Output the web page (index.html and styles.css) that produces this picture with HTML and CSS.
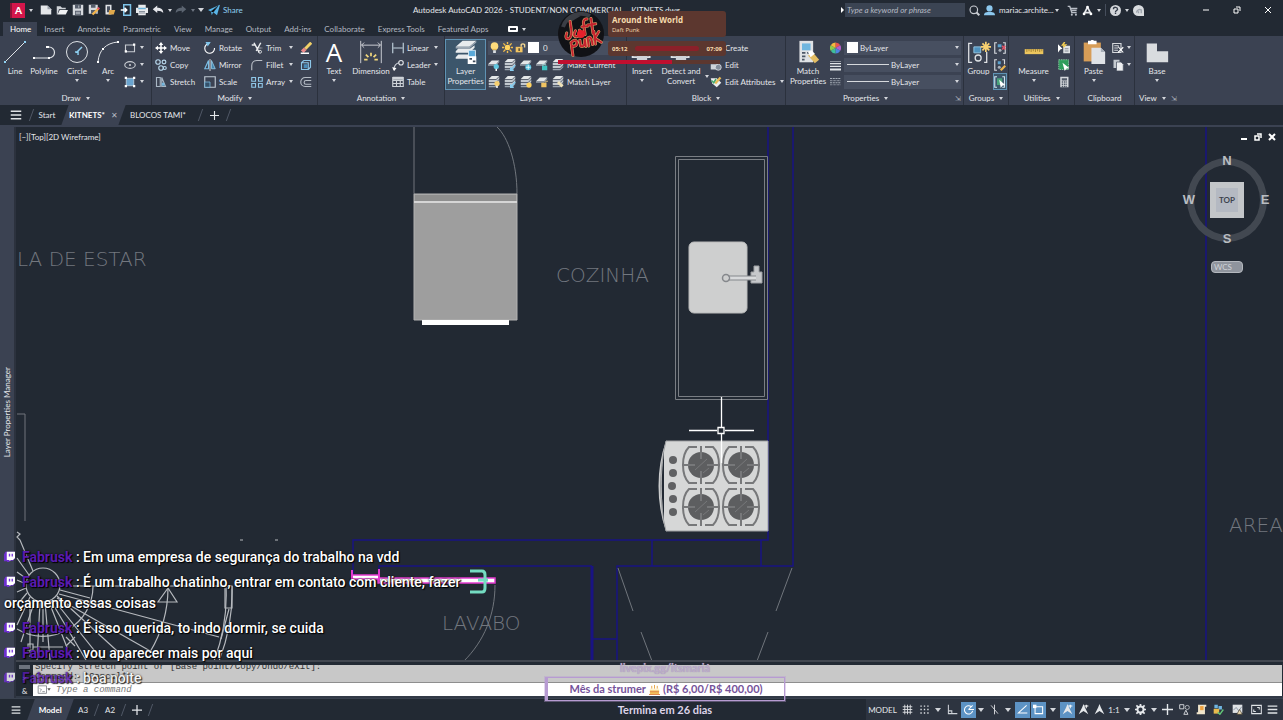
FILE: index.html
```html
<!DOCTYPE html>
<html lang="en">
<head>
<meta charset="utf-8">
<title>Autodesk AutoCAD 2026 - KITNETS.dwg</title>
<link rel="stylesheet" href="styles.css">
</head>
<body>
<svg class="defs" aria-hidden="true">
  <defs>
    <symbol id="new" viewBox="0 0 16 16"><path fill="#e4e6e9" d="M1 2h9l5 5v7H1z"/><path fill="#9aa1ab" d="M10 2v5h5z"/></symbol>
    <symbol id="open" viewBox="0 0 16 16"><path fill="#cfd3d8" d="M1 3h5l2 2h5v2H4l-2 7H1z"/><path fill="#f0f1f3" d="M5 8h11l-3 6H2z"/></symbol>
    <symbol id="save" viewBox="0 0 16 16"><path fill="#d6d9dd" d="M1 1h14v14H1z"/><path fill="#555d6b" d="M4 1h8v5H4zM4 9h8v6H4z"/><path stroke="#d6d9dd" d="M5 11h6M5 13h6M9 2v3"/></symbol>
    <symbol id="saveas" viewBox="0 0 16 16"><path fill="#d6d9dd" d="M1 1h12v12H1z"/><path fill="#555d6b" d="M4 1h6v4H4zM4 8h7v5H4z"/><path stroke="#f5b54a" stroke-width="3" d="M6 14l8-8"/><path stroke="#e2556b" stroke-width="3" d="M13 7l2-2"/></symbol>
    <symbol id="tablet" viewBox="0 0 16 16"><path fill="#e0e3e6" d="M2 1h8v13H2z"/><path fill="#4a5261" d="M4 3h4v8H4z"/><path fill="#e0a94c" d="M7 8h8l-2 6H6z"/></symbol>
    <symbol id="phone" viewBox="0 0 16 16"><path fill="none" stroke="#7ec3e8" stroke-width="2" d="M5 1h9v14H5z"/><path stroke="#fff" stroke-width="2" d="M1 8h8M6 5l3 3-3 3" fill="none"/></symbol>
    <symbol id="print" viewBox="0 0 16 16"><path fill="#e8eaec" d="M3 1h10v4h3v7h-3v3H3v-3H0V5h3z"/><path fill="#6cb4dc" d="M3 5h10v2H3z"/><path stroke="#6b7483" d="M4 10h8M4 12h8"/></symbol>
    <symbol id="undo" viewBox="0 0 16 16"><path fill="currentColor" d="M1 7l6-5v3c5 0 8 2 8 7-2-2-4-3-8-3v3z"/></symbol>
    <symbol id="redo" viewBox="0 0 16 16"><path fill="currentColor" d="M15 7L9 2v3C4 5 1 7 1 12c2-2 4-3 8-3v3z"/></symbol>
    <symbol id="plane" viewBox="0 0 16 16"><path fill="#59b4e6" d="M0 8l16-7-4 14-5-4-2 4-1-5z"/><path stroke="#233140" d="M4 10l9-7-6 8"/></symbol>
    <symbol id="search" viewBox="0 0 16 16"><circle cx="7" cy="7" r="5.500" fill="none" stroke="#c9cdd3" stroke-width="1.700"/><path stroke="#c9cdd3" stroke-width="3" d="M11 11l4 4"/></symbol>
    <symbol id="user" viewBox="0 0 16 16"><circle cx="8" cy="5" r="4.500" fill="#8cc8ee"/><path fill="#8cc8ee" d="M0 15c0-5 4-5 8-5s8 0 8 5z"/></symbol>
    <symbol id="cart" viewBox="0 0 16 16"><path fill="none" stroke="#b9bec6" stroke-width="2" d="M1 2h3l3 9h7M5 5h10M6 8h8"/><circle cx="7" cy="14" r="1.500" fill="#b9bec6"/><circle cx="13" cy="14" r="1.500" fill="#b9bec6"/></symbol>
    <symbol id="nodes" viewBox="0 0 16 16"><path fill="none" stroke="#e5e7ea" stroke-width="2.500" d="M8 3L3 13M8 3l5 10M4 11h8"/><circle cx="8" cy="3" r="2" fill="#fff"/><circle cx="3" cy="13" r="2" fill="#fff"/><circle cx="13" cy="13" r="2" fill="#fff"/></symbol>
    <symbol id="help" viewBox="0 0 16 16"><circle cx="8" cy="8" r="8" fill="#d3d6da"/><path fill="none" stroke="#333b48" stroke-width="2" d="M5 6c0-4 6-3 6 0 0 2-3 2-3 4M8 11v2"/></symbol>
    <symbol id="chatbot" viewBox="0 0 16 16"><path fill="#d9dcdf" d="M8 0a8 8 0 0 1 8 8v8H8A8 8 0 0 1 8 0z"/><path fill="none" stroke="#9da3ac" stroke-width="2" d="M5 11c1-4 4-5 7-4v5M8 12V9"/></symbol>
    <symbol id="line" viewBox="0 0 24 24"><path stroke="#dfe2e6" d="M2 22L22 2"/><path stroke="#8fd0f2" stroke-width="2" d="M1 22h2M21 2h2"/></symbol>
    <symbol id="pline" viewBox="0 0 24 24"><path fill="none" stroke="#dfe2e6" stroke-width="1.200" d="M2 18h15a5 5 0 0 0 0-11"/><path stroke="#fff" stroke-width="2" d="M1 18h2M16 18h2M14 7h3"/></symbol>
    <symbol id="circle" viewBox="0 0 24 24"><circle cx="12" cy="12" r="10.500" fill="none" stroke="#dfe2e6"/><path stroke="#8fd0f2" stroke-width="1.500" d="M11 13l6-6M10 12h3v3"/></symbol>
    <symbol id="arc" viewBox="0 0 24 24"><path fill="none" stroke="#dfe2e6" d="M2 22C3 10 10 3 22 2"/><path stroke="#fff" stroke-width="2" d="M1 22h2M6 9h2M21 2h2"/></symbol>
    <symbol id="rect" viewBox="0 0 16 16"><path fill="none" stroke="#c8ccd2" stroke-width="1.500" d="M2 4h12v9H2z"/><path fill="#fff" d="M1 11h3v3H1zM12 2h3v3h-3z"/></symbol>
    <symbol id="ellipse" viewBox="0 0 16 16"><ellipse cx="8" cy="8" rx="7" ry="4.500" fill="none" stroke="#c8ccd2" stroke-width="1.500"/><path stroke="#fff" stroke-width="2" d="M7 8h2"/></symbol>
    <symbol id="hatch" viewBox="0 0 16 16"><path fill="#6ba5d0" stroke="#c8d8e6" d="M3 3h10v10H3z"/><path fill="#fff" d="M1 1h3v3H1zM12 1h3v3h-3zM1 12h3v3H1zM12 12h3v3h-3z"/></symbol>
    <symbol id="move" viewBox="0 0 16 16"><path fill="#fff" d="M8 0l3 4H9v3h3V5l4 3-4 3V9H9v3h2l-3 4-3-4h2V9H4v2L0 8l4-3v2h3V4H5z"/></symbol>
    <symbol id="rotate" viewBox="0 0 16 16"><path fill="none" stroke="#fff" stroke-width="1.500" d="M7 2a6.500 6.500 0 1 0 7 6"/><path fill="#7fc4ea" d="M2 0h7L5 6z"/></symbol>
    <symbol id="trim" viewBox="0 0 16 16"><path fill="none" stroke="#e8eaed" stroke-width="2" d="M4 1l7 13M13 1L7 12M1 4h5"/><circle cx="12" cy="13" r="2" fill="none" stroke="#fff"/><path stroke="#fff" stroke-dasharray="2 1" d="M8 8h7"/></symbol>
    <symbol id="erase" viewBox="0 0 16 16"><path stroke="#f0d068" stroke-width="4" d="M15 1L7 9"/><path stroke="#ec8b8b" stroke-width="5" d="M7 9l-4 4"/><path stroke="#fff" stroke-width="2" d="M1 15h11"/></symbol>
    <symbol id="copy" viewBox="0 0 16 16"><g fill="none" stroke="#b8d8ec" stroke-width="1.500"><circle cx="4" cy="4" r="3"/><circle cx="12" cy="4" r="2.500"/><circle cx="8" cy="12" r="3"/><circle cx="13" cy="12" r="2"/></g></symbol>
    <symbol id="mirror" viewBox="0 0 16 16"><path fill="none" stroke="#7cbfe6" stroke-width="1.500" d="M6 2v11H1z"/><path fill="#4387b0" stroke="#9ed3ef" d="M10 2v11h5z"/><path stroke="#fff" d="M8 0v16"/></symbol>
    <symbol id="fillet" viewBox="0 0 16 16"><path fill="none" stroke="#b9bec6" stroke-width="1.500" d="M1 15V9c0-4 3-7 7-7h7"/></symbol>
    <symbol id="explode" viewBox="0 0 16 16"><path fill="none" stroke="#8cc6e8" stroke-width="1.500" d="M2 5h9v9H2zM2 5l3-3h9v9l-3 3"/><path fill="#4a8cb8" d="M5 7h5v5H5z"/></symbol>
    <symbol id="stretch" viewBox="0 0 16 16"><path fill="none" stroke="#a9b7c4" stroke-width="1.500" d="M2 2h5v12H2zM9 2l5 12H9z"/><path fill="#73b6de" d="M9 9h3l1 4H9z"/></symbol>
    <symbol id="scale" viewBox="0 0 16 16"><path fill="none" stroke="#c0cad3" stroke-width="1.500" d="M1 1h14v14H1z"/><path fill="#34516a" stroke="#7fc0e6" d="M1 8h7v7H1z"/></symbol>
    <symbol id="array" viewBox="0 0 16 16"><path fill="none" stroke="#8fc7e8" stroke-width="1.500" d="M1 2h5v5H1zM10 2h5v5h-5zM1 10h5v5H1zM10 10h5v5h-5z"/></symbol>
    <symbol id="offset" viewBox="0 0 16 16"><path fill="none" stroke="#b5bcc5" stroke-width="1.500" d="M15 2H7a6 6 0 0 0 0 12h8M15 6H8a2.500 2.500 0 0 0 0 5h7"/></symbol>
    <symbol id="dim" viewBox="0 0 28 28"><path stroke="#dfe2e6" fill="none" d="M2 1v26M26 1v26M3 6h22M6 3L3 6l3 3M22 3l3 3-3 3"/><path stroke="#f2d77c" stroke-width="2" d="M14 15v4M8 17l3 3M20 17l-3 3M6 23h4M18 23h4"/></symbol>
    <symbol id="linear" viewBox="0 0 16 16"><path fill="none" stroke="#c3d4e0" stroke-width="1.500" d="M1 1v14M15 1v14M2 8h12"/></symbol>
    <symbol id="leader" viewBox="0 0 16 16"><path fill="none" stroke="#c9ced5" stroke-width="1.500" d="M2 15C3 8 5 6 9 5"/><circle cx="12" cy="5" r="3" fill="none" stroke="#e2e5e9" stroke-width="1.500"/><path fill="#fff" d="M0 11l3 5 3-4z"/></symbol>
    <symbol id="table" viewBox="0 0 16 16"><path fill="none" stroke="#cdd2d8" stroke-width="1.500" d="M1 2h14v12H1zM1 6h14M1 10h14M6 6v8M11 6v8"/><path fill="#cdd2d8" d="M1 1h14v4H1z"/></symbol>
    <symbol id="layers" viewBox="0 0 28 28"><path fill="#e8ebed" d="M10 1h16l-8 7H2zM2 13l3-3h14l5-4v3l-6 6H2zM2 20l3-3h12v5H2z"/><path fill="#9da8b3" d="M2 8v2h16l8-7V1l-8 7z"/><path fill="#59a9d8" stroke="#e7f3fa" d="M17 12h8v8h-8z"/><path fill="#fff" d="M16 19h10v9H16z"/><path stroke="#3c4a59" stroke-width="2" d="M18 22h3M22 25h3"/></symbol>
    <symbol id="bulb" viewBox="0 0 16 16"><circle cx="8" cy="6" r="5.500" fill="#ffdc7c"/><path fill="#e7b950" d="M5 10h6v2H5z"/><path fill="#dce0e4" d="M6 12h4v4H6z"/></symbol>
    <symbol id="sun" viewBox="0 0 16 16"><circle cx="8" cy="8" r="4" fill="#ffd360"/><path stroke="#f2bd4a" stroke-width="2" d="M8 0v3M8 13v3M0 8h3M13 8h3M2 2l3 3M11 11l3 3M14 2l-3 3M5 11l-3 3"/></symbol>
    <symbol id="lock" viewBox="0 0 16 16"><path fill="#f1c462" d="M1 7h10v8H1z"/><path fill="none" stroke="#f1d591" stroke-width="2" d="M9 7V4a3 3 0 0 1 5 0v4"/><path fill="#4a4331" d="M5 9h2v4H5z"/></symbol>
    <symbol id="sheet" viewBox="0 0 16 16"><path fill="#e3e6e8" d="M5 2h10l-4 5H0z"/><path fill="#96a0ab" d="M0 7v2h11l4-5V2l-4 5z"/></symbol>
    <symbol id="stack" viewBox="0 0 16 16"><path fill="#e3e6e8" d="M5 0h10l-4 4H1z"/><path fill="#c3c9cf" d="M1 5h10l4-4v3l-4 4H1zM1 9h10l4-4v3l-4 4H1z"/><path fill="#98a2ad" d="M1 13h10l4-4v2l-4 4H1z"/></symbol>
    <symbol id="lyfrz" viewBox="0 0 16 16"><use href="#sheet"/><circle cx="11" cy="11" r="4" fill="#55bfdc"/><path stroke="#fff" d="M11 8v6M8 11h6"/></symbol>
    <symbol id="lyoff" viewBox="0 0 16 16"><use href="#sheet"/><circle cx="11" cy="10" r="3.500" fill="#62c8e0"/><path fill="#fff" d="M10 13h2v3h-2z"/></symbol>
    <symbol id="lylock" viewBox="0 0 16 16"><use href="#sheet"/><path fill="#3fc2c0" d="M8 9h7v6H8z"/><path fill="none" stroke="#a2e0df" d="M9 9V7h4v2"/></symbol>
    <symbol id="lybulb" viewBox="0 0 16 16"><use href="#stack"/><circle cx="12" cy="10" r="3.500" fill="#f5cf70"/><path fill="#fff" d="M11 13h2v3h-2z"/></symbol>
    <symbol id="lyarrow" viewBox="0 0 16 16"><use href="#stack"/><path stroke="#87ccef" stroke-width="2" d="M15 8l-6 7M9 11v4h4" fill="none"/></symbol>
    <symbol id="lysun" viewBox="0 0 16 16"><use href="#stack"/><circle cx="12" cy="12" r="3.500" fill="#ffd360"/></symbol>
    <symbol id="lymatch" viewBox="0 0 16 16"><use href="#stack"/><path stroke="#efe2b8" stroke-width="4" d="M8 8l6 6"/></symbol>
    <symbol id="lyopen" viewBox="0 0 16 16"><use href="#sheet"/><path fill="#f1c462" d="M7 9h7v6H7z"/><path fill="none" stroke="#f1d591" d="M13 9V7h3"/></symbol>
    <symbol id="tag" viewBox="0 0 16 16"><path fill="#eceef0" d="M1 3h8l6 6-6 6-6-5z"/><path stroke="#e9bb55" stroke-width="3" d="M7 10l7-8"/><path stroke="#47a96b" stroke-width="2" d="M2 6l3 3 3-5" fill="none"/></symbol>
    <symbol id="blk" viewBox="0 0 16 16"><path fill="#d0d4d9" d="M1 7h9v7H1z"/><circle cx="11" cy="11" r="4" fill="#848e9b" stroke="#e3e6e9"/></symbol>
    <symbol id="bigblk" viewBox="0 0 28 28"><path fill="none" stroke="#dfe2e5" stroke-width="2" d="M3 4h20v16H3z"/><path fill="#cfd3d8" d="M8 16h12v9H8z"/></symbol>
    <symbol id="match" viewBox="0 0 28 28"><path fill="#dfe2e5" d="M4 1h16v25H4z"/><path fill="#6fb6df" d="M7 4h10v8H7z"/><path stroke="#4d5867" stroke-width="2" d="M7 15h4M7 19h4M7 23h3M13 15h4"/><path fill="#e3bd63" d="M14 18l8 9 5-4-7-8z"/><path fill="#fff" d="M14 14l4-2 4 4-5 4z"/></symbol>
    <symbol id="wheel" viewBox="0 0 16 16"><path fill="#e8534f" d="M8 8V0a8 8 0 0 1 7 4z"/><path fill="#b45ec9" d="M8 8l7-4a8 8 0 0 1 0 8z"/><path fill="#4f86e0" d="M8 8l7 4a8 8 0 0 1-7 4z"/><path fill="#3fbf9b" d="M8 8v8a8 8 0 0 1-7-4z"/><path fill="#8ccc4b" d="M8 8l-7 4a8 8 0 0 1 0-8z"/><path fill="#f5b83d" d="M8 8L1 4a8 8 0 0 1 7-4z"/></symbol>
    <symbol id="weights" viewBox="0 0 16 16"><path fill="#e2e5e8" d="M0 2h16v1H0zM0 5h16v2H0zM0 9h16v2H0zM0 13h16v3H0z"/></symbol>
    <symbol id="ltype" viewBox="0 0 16 16"><path stroke="#a7aeb8" stroke-width="1.500" stroke-dasharray="3 1" d="M0 3h16M0 9h16"/><path stroke="#a7aeb8" stroke-width="1.500" stroke-dasharray="1 1" d="M0 6h16M0 12h16"/></symbol>
    <symbol id="group" viewBox="0 0 28 28"><path fill="none" stroke="#dfe2e6" stroke-width="1.500" d="M6 4H2v22h4M20 26h3V14"/><path fill="#4f91bd" stroke="#9bcbe8" d="M8 8h8v7H8z"/><circle cx="13" cy="21" r="3.500" fill="none" stroke="#dfe2e6" stroke-width="1.500"/><path stroke="#f7d070" stroke-width="2" d="M22 2v12M16 8h12M18 4l8 8M26 4l-8 8"/></symbol>
    <symbol id="ungroup" viewBox="0 0 16 16"><path fill="none" stroke="#d6d9de" stroke-width="1.500" d="M4 1H1v14h3M12 1h3v14h-3"/><path fill="#5ba1cd" d="M5 3h5v4H5z"/><circle cx="8" cy="11" r="2" fill="#aab1bb"/><path stroke="#df5367" stroke-width="2" d="M11 5l4 5M15 5l-4 5"/></symbol>
    <symbol id="gedit" viewBox="0 0 16 16"><path fill="none" stroke="#d6d9de" stroke-width="1.500" d="M4 1H1v14h3M11 1h3v6"/><path fill="#5ba1cd" d="M5 3h4v4H5z"/><circle cx="7" cy="11" r="2" fill="#aab1bb"/><path stroke="#ebb54e" stroke-width="3" d="M9 15l6-6"/></symbol>
    <symbol id="gsel" viewBox="0 0 16 16"><path fill="none" stroke="#cfe3ef" stroke-width="1.500" d="M4 1H1v14h3M11 1h3v14h-3"/><path fill="#49a27b" d="M4 3h7v9H4z"/><path fill="#fff" d="M7 5l8 7-4 1-2 3z"/></symbol>
    <symbol id="ruler" viewBox="0 0 28 12"><path fill="#edc65e" d="M1 2h26v7H1z"/><path stroke="#8a6c25" d="M4 2v4M7 2v3M10 2v4M13 2v3M16 2v4M19 2v3M22 2v4M25 2v3"/></symbol>
    <symbol id="qsel" viewBox="0 0 16 16"><path fill="#dfe2e5" d="M7 5h9v10H7z"/><path fill="#fff" d="M0 3l6 6-3 1-3 4z"/><path stroke="#f2cd53" stroke-width="2" d="M9 0L6 4h4L7 7" fill="none"/><path stroke="#68717e" d="M9 9h5M9 12h5"/></symbol>
    <symbol id="selall" viewBox="0 0 16 16"><path fill="#2e9d5b" stroke="#9ddcb4" stroke-dasharray="2 1" d="M1 1h13v13H1z"/><path fill="#fff" d="M6 5l9 7-4 1-2 3z"/></symbol>
    <symbol id="calc" viewBox="0 0 16 16"><path fill="#d5d8dc" d="M3 1h11v14H3z"/><path fill="#525b69" d="M5 3h7v3H5z"/><path stroke="#525b69" stroke-width="2" stroke-dasharray="2 1" d="M5 8h7M5 11h7M5 14h7"/></symbol>
    <symbol id="paste" viewBox="0 0 28 28"><path fill="#d79d57" d="M2 3h20v22H2z"/><path fill="#fff" d="M7 1h3l2-2 2 2h3v4H7z"/><path fill="#dfe2e6" d="M11 9h11l5 5v14H11z"/><path fill="#a7aeb8" d="M22 9v5h5z"/></symbol>
    <symbol id="cut" viewBox="0 0 16 16"><path fill="none" stroke="#d5d8dc" stroke-width="1.500" d="M1 2h11v12H1zM3 5h6M3 8h5M3 11h5"/><path stroke="#fff" stroke-width="1.500" d="M8 6l7 8M15 7l-7 7"/></symbol>
    <symbol id="clip" viewBox="0 0 16 16"><path fill="#c5cad0" d="M2 1h8v11H2z"/><path fill="#eceef0" stroke="#495262" d="M6 4h6l3 3v9H6z"/></symbol>
    <symbol id="base" viewBox="0 0 28 24"><path fill="#d9dcdf" d="M2 2h12v9h13v13H2z"/></symbol>
    <symbol id="grid" viewBox="0 0 16 16"><path stroke="#dfe2e5" d="M4 1v14M8 1v14M12 1v14M1 4h14M1 8h14M1 12h14" stroke-width="1.300"/></symbol>
    <symbol id="snap" viewBox="0 0 16 16"><path stroke="#dfe2e5" stroke-width="2" stroke-dasharray="2 3" d="M2 3h13M2 8h13M2 13h13"/></symbol>
    <symbol id="ortho" viewBox="0 0 16 16"><path fill="none" stroke="#cfd3d8" stroke-width="1.500" d="M2 1v13h13M2 10h5v4"/></symbol>
    <symbol id="polar" viewBox="0 0 16 16"><path fill="none" stroke="#fff" stroke-width="1.500" d="M12 4a6 6 0 1 0 2 6M8 8h8M8 8l6-6"/></symbol>
    <symbol id="iso" viewBox="0 0 16 16"><path stroke="#dfe2e5" stroke-width="1.300" d="M3 2l10 12M8 1v14"/></symbol>
    <symbol id="track" viewBox="0 0 16 16"><path fill="none" stroke="#fff" stroke-width="1.500" d="M14 2L2 13h13"/></symbol>
    <symbol id="osnap" viewBox="0 0 16 16"><path fill="none" stroke="#fff" stroke-width="1.500" d="M3 4h11v10H3z"/><path fill="#fff" d="M0 1h5v5H0z"/></symbol>
    <symbol id="anno" viewBox="0 0 16 16"><path fill="#e5e8eb" d="M8 0l2 5 5 10-7-5-7 5L6 5z"/></symbol>
    <symbol id="anno2" viewBox="0 0 16 16"><use href="#anno"/><path stroke="#fff" stroke-width="1.500" d="M12 1v5M9 3h6"/></symbol>
    <symbol id="gear" viewBox="0 0 16 16"><circle cx="8" cy="8" r="4.500" fill="none" stroke="#e5e8eb" stroke-width="3"/><path stroke="#e5e8eb" stroke-width="2.500" d="M8 0v3M8 13v3M0 8h3M13 8h3M2 2l3 3M11 11l3 3M14 2l-3 3M5 11l-3 3"/></symbol>
    <symbol id="plus" viewBox="0 0 16 16"><path stroke="#e5e8eb" stroke-width="2" d="M8 0v16M0 8h16"/></symbol>
    <symbol id="iso2" viewBox="0 0 16 16"><path fill="none" stroke="#dfe2e5" stroke-width="1.300" d="M1 1h6v6H1zM7 15l3-6 3 6z"/><circle cx="12" cy="5" r="3" fill="none" stroke="#dfe2e5"/></symbol>
    <symbol id="scroll" viewBox="0 0 16 16"><path fill="#f0e5cb" d="M3 1h12v3h-2v11H1v-3h2z"/><path fill="#eea23f" d="M6 3h5v6H6z"/></symbol>
    <symbol id="puzzle" viewBox="0 0 16 16"><path fill="#6fb5e0" d="M2 1h5v5H2zM8 3h5v5H8z"/><path fill="#e7ba4d" d="M1 7h8v7H1z"/><path stroke="#64c878" stroke-width="2" fill="none" d="M7 12l3 3 5-7"/></symbol>
    <symbol id="photo" viewBox="0 0 16 16"><path fill="#dfe2e5" d="M1 1h14v12H1z"/><path fill="none" stroke="#69778a" d="M2 9l4-4 4 5 4-6"/><path fill="#e9d8b5" stroke="#4a4232" d="M7 15l4-7 4 7z"/></symbol>
    <symbol id="full" viewBox="0 0 16 16"><path fill="none" stroke="#e0e3e6" stroke-width="1.500" d="M1 2h14v12H1zM4 8v3h3M12 8V5H9"/></symbol>
    <symbol id="menu" viewBox="0 0 16 16"><path stroke="#e0e3e6" stroke-width="2" d="M1 3h14M1 8h14M1 13h14"/></symbol>
    <symbol id="twitch" viewBox="0 0 16 16"><path fill="#6d2fcf" d="M2 1L0 5v10h4l2 2 3-3h4l3-3V1z"/><path fill="#fff" d="M4 1h12v9l-3 3h-3l-2 2v-2H4z"/><path stroke="#7b3bdc" stroke-width="2" d="M8 4v4M12 4v4"/></symbol>
  </defs>
</svg>

<header class="titlebar">
  <div class="quick">
    <button class="logo" aria-label="Application menu">A</button><i class="dd"></i>
    <button aria-label="New"><svg><use href="#new"/></svg></button>
    <button aria-label="Open"><svg><use href="#open"/></svg></button>
    <button aria-label="Save"><svg><use href="#save"/></svg></button>
    <button aria-label="Save as"><svg><use href="#saveas"/></svg></button>
    <button aria-label="Open from web"><svg><use href="#tablet"/></svg></button>
    <button aria-label="Save to mobile"><svg><use href="#phone"/></svg></button>
    <button aria-label="Plot"><svg><use href="#print"/></svg></button>
    <button class="undo" aria-label="Undo"><svg><use href="#undo"/></svg></button><i class="dd"></i>
    <button class="redo" aria-label="Redo"><svg><use href="#redo"/></svg></button><i class="dd dim"></i>
    <i class="dd bar"></i>
    <button class="share"><svg><use href="#plane"/></svg>Share</button>
  </div>
  <div class="apptitle">Autodesk AutoCAD 2026 - STUDENT/NON COMMERCIAL &nbsp;&nbsp; KITNETS.dwg</div>
  <div class="account">
    <i class="dd side"></i>
    <input class="search" type="text" placeholder="Type a keyword or phrase" aria-label="Search help">
    <button aria-label="Search"><svg><use href="#search"/></svg></button>
    <button class="who"><svg><use href="#user"/></svg>mariac.archite...</button><i class="dd"></i>
    <button aria-label="Store"><svg><use href="#cart"/></svg></button>
    <button aria-label="Apps"><svg><use href="#nodes"/></svg></button><i class="dd"></i>
    <span class="rule"></span>
    <button aria-label="Help"><svg><use href="#help"/></svg></button><i class="dd"></i>
    <button aria-label="Assistant"><svg><use href="#chatbot"/></svg></button>
    <div class="winbtns">
      <button aria-label="Minimize"><svg viewBox="0 0 8 8"><path stroke="#fff" d="M1 4h6"/></svg></button>
      <button aria-label="Restore"><svg viewBox="0 0 8 8"><path fill="none" stroke="#fff" d="M1 3h4v4H1zM3 1h4v4"/></svg></button>
      <button aria-label="Close"><svg viewBox="0 0 8 8"><path stroke="#fff" d="M1 1l6 6M7 1L1 7"/></svg></button>
    </div>
  </div>
</header>

<nav class="menutabs">
  <button class="on">Home</button><button>Insert</button><button>Annotate</button><button>Parametric</button><button>View</button><button>Manage</button><button>Output</button><button>Add-ins</button><button>Collaborate</button><button>Express Tools</button><button>Featured Apps</button>
  <button class="ribtoggle" aria-label="Minimize ribbon"><span class="pill"></span><i class="dd"></i></button>
</nav>

<section class="ribbon">
  <div class="panel draw">
    <div class="body">
      <button class="big"><svg><use href="#line"/></svg>Line</button>
      <button class="big"><svg><use href="#pline"/></svg>Polyline</button>
      <button class="big"><svg><use href="#circle"/></svg>Circle<i class="dd"></i></button>
      <button class="big"><svg><use href="#arc"/></svg>Arc<i class="dd"></i></button>
      <div class="col">
        <button aria-label="Rectangle"><svg><use href="#rect"/></svg><i class="dd"></i></button>
        <button aria-label="Ellipse"><svg><use href="#ellipse"/></svg><i class="dd"></i></button>
        <button aria-label="Hatch"><svg><use href="#hatch"/></svg><i class="dd"></i></button>
      </div>
    </div>
    <div class="cap">Draw<i class="dd"></i></div>
  </div>
  <div class="panel modify">
    <div class="body">
      <div class="col"><button><svg><use href="#move"/></svg>Move</button><button><svg><use href="#copy"/></svg>Copy</button><button><svg><use href="#stretch"/></svg>Stretch</button></div>
      <div class="col"><button><svg><use href="#rotate"/></svg>Rotate</button><button><svg><use href="#mirror"/></svg>Mirror</button><button><svg><use href="#scale"/></svg>Scale</button></div>
      <div class="col"><button><svg><use href="#trim"/></svg>Trim<i class="dd end"></i></button><button><svg><use href="#fillet"/></svg>Fillet<i class="dd end"></i></button><button><svg><use href="#array"/></svg>Array<i class="dd end"></i></button></div>
      <div class="col"><button aria-label="Erase"><svg><use href="#erase"/></svg></button><button aria-label="Explode"><svg><use href="#explode"/></svg></button><button aria-label="Offset"><svg><use href="#offset"/></svg></button></div>
    </div>
    <div class="cap">Modify<i class="dd"></i></div>
  </div>
  <div class="panel annot">
    <div class="body">
      <button class="big"><span class="bigA">A</span>Text<i class="dd"></i></button>
      <button class="big"><svg><use href="#dim"/></svg>Dimension</button>
      <div class="col"><button><svg><use href="#linear"/></svg>Linear<i class="dd end"></i></button><button><svg><use href="#leader"/></svg>Leader<i class="dd end"></i></button><button><svg><use href="#table"/></svg>Table</button></div>
    </div>
    <div class="cap">Annotation<i class="dd"></i></div>
  </div>
  <div class="panel layer">
    <div class="body">
      <button class="big lit"><svg><use href="#layers"/></svg>Layer<br>Properties</button>
      <div class="col">
        <div class="combo"><svg><use href="#bulb"/></svg><svg><use href="#sun"/></svg><svg><use href="#lock"/></svg><b class="swatch"></b><select aria-label="Layer"><option>0</option></select></div>
        <div class="row"><button aria-label="Off"><svg><use href="#lyoff"/></svg></button><button aria-label="Isolate"><svg><use href="#lyarrow"/></svg></button><button aria-label="Freeze"><svg><use href="#lyfrz"/></svg></button><button aria-label="Lock"><svg><use href="#lylock"/></svg></button><button><svg><use href="#stack"/></svg>Make Current</button></div>
        <div class="row"><button aria-label="Turn on"><svg><use href="#lybulb"/></svg></button><button aria-label="Unisolate"><svg><use href="#lyarrow"/></svg></button><button aria-label="Thaw"><svg><use href="#lysun"/></svg></button><button aria-label="Unlock"><svg><use href="#lyopen"/></svg></button><button><svg><use href="#lymatch"/></svg>Match Layer</button></div>
      </div>
    </div>
    <div class="cap">Layers<i class="dd"></i></div>
  </div>
  <div class="panel block">
    <div class="body">
      <button class="big"><svg><use href="#bigblk"/></svg>Insert<i class="dd"></i></button>
      <button class="big"><svg><use href="#bigblk"/></svg>Detect and<br>Convert</button>
      <button class="more" aria-label="Detect options"><i class="dd"></i></button>
      <div class="col"><button><svg><use href="#blk"/></svg>Create</button><button><svg><use href="#blk"/></svg>Edit</button><button><svg><use href="#tag"/></svg>Edit Attributes<i class="dd end"></i></button></div>
    </div>
    <div class="cap">Block<i class="dd"></i></div>
  </div>
  <div class="panel props">
    <div class="body">
      <button class="big"><svg><use href="#match"/></svg>Match<br>Properties</button>
      <div class="col">
        <div class="prow"><svg><use href="#wheel"/></svg><span class="combo"><b class="swatch"></b><select aria-label="Object color"><option>ByLayer</option></select><i class="dd"></i></span></div>
        <div class="prow"><svg><use href="#weights"/></svg><span class="combo"><b class="stroke"></b><select aria-label="Lineweight"><option>ByLayer</option></select><i class="dd"></i></span></div>
        <div class="prow"><svg><use href="#ltype"/></svg><span class="combo"><b class="stroke"></b><select aria-label="Linetype"><option>ByLayer</option></select><i class="dd"></i></span></div>
      </div>
    </div>
    <div class="cap">Properties<i class="dd"></i><span class="launch">⇲</span></div>
  </div>
  <div class="panel groups">
    <div class="body">
      <button class="big"><svg><use href="#group"/></svg>Group</button>
      <div class="col"><button aria-label="Ungroup"><svg><use href="#ungroup"/></svg></button><button aria-label="Group edit"><svg><use href="#gedit"/></svg></button><button class="lit" aria-label="Group selection"><svg><use href="#gsel"/></svg></button></div>
    </div>
    <div class="cap">Groups<i class="dd"></i></div>
  </div>
  <div class="panel utils">
    <div class="body">
      <button class="big"><svg><use href="#ruler"/></svg>Measure<i class="dd"></i></button>
      <div class="col"><button aria-label="Quick select"><svg><use href="#qsel"/></svg></button><button aria-label="Select all"><svg><use href="#selall"/></svg></button><button aria-label="Calculator"><svg><use href="#calc"/></svg></button></div>
    </div>
    <div class="cap">Utilities<i class="dd"></i></div>
  </div>
  <div class="panel clipb">
    <div class="body">
      <button class="big"><svg><use href="#paste"/></svg>Paste<i class="dd"></i></button>
      <div class="col"><button aria-label="Cut"><svg><use href="#cut"/></svg><i class="dd"></i></button><button aria-label="Copy clip"><svg><use href="#clip"/></svg><i class="dd"></i></button></div>
    </div>
    <div class="cap">Clipboard</div>
  </div>
  <div class="panel view">
    <div class="body"><button class="big"><svg><use href="#base"/></svg>Base<i class="dd"></i></button></div>
    <div class="cap">View<i class="dd"></i><span class="launch">⇲</span></div>
  </div>
</section>

<nav class="filetabs">
  <button class="burger" aria-label="Files"><svg><use href="#menu"/></svg></button>
  <i class="slash"></i>
  <button class="start">Start</button>
  <button class="current"><span>KITNETS*</span><span class="x">✕</span></button>
  <button class="other">BLOCOS TAMI*</button>
  <i class="slash"></i>
  <button class="add" aria-label="New drawing"><svg><use href="#plus"/></svg></button>
  <i class="slash"></i>
</nav>

<main class="work">
  <aside class="palette"><span>Layer Properties Manager</span></aside>
  <div class="stage">
    <div class="canvas">
      <svg class="drawing" role="img" aria-label="Kitchen floor plan">
        <defs>
          <g id="burner">
            <circle r="13" fill="#5d5e60"/>
            <g fill="none" stroke="#77787a" stroke-width="2">
              <path d="M-4-18h-8c-8 8-8 28 0 36h8M4-18h8c8 8 8 28 0 36H4M0-19v13M0 19V6M-19 0h13M19 0H6"/>
            </g>
            <path d="M-6 5L6-6M2 8l6-5" stroke="#77787a"/>
          </g>
        </defs>
        <g transform="translate(-16 -127)" fill="none">
          <g stroke="#191383" stroke-width="1.500">
            <path d="M768 127v413H353v36M793 127v439H617v94M379 576v-10h213M652 540v26M761 540v26M592 639h25M1206 127v533"/>
            <path d="M592 566v94" stroke-width="3"/>
          </g>
          <g stroke="#70757c">
            <path d="M414 127v67M497 127c11 10 20 36 20 67M17 414h8v107"/>
            <path d="M618 568l15 43M641 632l11 29M792 568l-16 43M768 632l-11 29M495 585c0 30-11 56-31 76"/>
            <path d="M675.500 156.500h92v243h-92zM678.500 159.500h86v237h-86z" stroke="#7a7e84"/>
          </g>
          <path d="M414 194h103v126H414z" fill="#9e9e9e" stroke="#b2b2b2"/>
          <path d="M415 195h101v6H415z" fill="#8e8e8e"/>
          <path d="M414 202h103" stroke="#d5d5d5" stroke-width="2"/>
          <path d="M422 320h87v5h-87z" fill="#fff"/>
          <rect x="689" y="242" width="58" height="71" rx="5" fill="#cecfcf" stroke="#b9baba"/>
          <path d="M754 266h5v6h3v11h-11v-11h3z" fill="#c6c8cb" stroke="#9da0a4"/>
          <path d="M728 278h28" stroke="#85888c" stroke-width="5"/><path d="M728 278h28" stroke="#d8dadc" stroke-width="3"/>
          <circle cx="726" cy="278" r="3.500" stroke="#85888c" stroke-width="1.500"/>
          <path d="M667 441c-10 28-10 62 0 90" stroke="#cbcccd" stroke-width="2"/>
          <path d="M666 441h102v90H666c-7-27-7-63 0-90z" fill="#d6d7d7" stroke="#9fa1a3"/>
          <path d="M664 452c-3 22-3 46 0 68z" fill="#222933"/>
          <g fill="#606163"><circle cx="673" cy="460" r="4"/><circle cx="673" cy="473" r="4"/><circle cx="672" cy="486" r="4"/><circle cx="673" cy="499" r="4"/><circle cx="673" cy="512" r="4"/></g>
          <use href="#burner" x="701" y="465"/><use href="#burner" x="741" y="465"/><use href="#burner" x="701" y="507"/><use href="#burner" x="741" y="507"/>
          <path d="M689 430.500h28M725 430.500h29M721.500 397v30M721.500 434v29" stroke="#fff" stroke-width="1.300"/>
          <path d="M718 427.500h6v6h-6z" stroke="#fff" stroke-width="1.300"/>
          <path d="M352 575h27v3h116v5H378v-4h-26z" fill="#fff" stroke="#e33ad0" stroke-width="1.500"/>
          <path d="M352 570v12M379 569v13" stroke="#e33ad0" stroke-width="2"/>
          <path d="M470 571h12q3 0 3 4v13q0 4-3 4h-12M478 580h10" stroke="#74dcc2" stroke-width="3"/>
          <g stroke="#b6b9be" stroke-width="1.200">
            <circle cx="43" cy="585" r="17"/>
            <path d="M93 586a50 50 0 0 1-76 43M168 588a125 125 0 0 1-18 64M232 586a190 190 0 0 1-13 75M226 586a185 185 0 0 1-12 75"/>
            <path d="M73 586h155M60 590l30 8M59 594l160 43M57 598l95 54M54 600l48 60M49 602l23 58M45 602l5 58M40 602l-3 58M35 600l-14 42M30 597l-13 28M27 593l-10 12M26 588l-9 4M26 584l-9-4M27 579l-10-7M29 575l-12-17M33 571l-13-31-3-3 3-3-3-2M57 596l70 64M51 601l35 59M43 602v40"/>
            <path d="M168 588l-10 14h19zM28 644h5v6h-5zM33 647h30M66 637l9 9M75 637l-9 9M30 602v55M225 586h7v22h-7zM229 609l-8 30"/>
            <path d="M240 540h3M275 540h3"/>
          </g>
          <g class="cadtext">
            <text x="17" y="266">LA DE ESTAR</text><text x="556" y="282">COZINHA</text><text x="442" y="630">LAVABO</text><text x="1229" y="532">AREA</text>
          </g>
        </g>
      </svg>
      <span class="vplabel">[−][Top][2D Wireframe]</span>
      <div class="viewtools">
        <div class="vpbtns">
          <button aria-label="Minimize view"><svg viewBox="0 0 8 8"><path stroke="#fff" stroke-width="2" d="M1 6h6"/></svg></button>
          <button aria-label="Restore view"><svg viewBox="0 0 8 8"><path fill="none" stroke="#fff" stroke-width="1.500" d="M1 3h4v4H1zM3 1h4v4"/></svg></button>
          <button aria-label="Close view"><svg viewBox="0 0 8 8"><path stroke="#fff" stroke-width="2" d="M1 1l6 6M7 1L1 7"/></svg></button>
        </div>
        <div class="cube">
          <b>N</b>
          <b>W</b><button>TOP</button><b>E</b>
          <b>S</b>
        </div>
        <button class="wcs">WCS</button>
      </div>
    </div>
    <div class="command">
      <div class="grip"><i></i><span>×</span><span>&amp;</span></div>
      <div class="cmdbox">
        <div class="history"><div>Specify stretch point or [Base point/Copy/Undo/eXit]:</div><div>Command: *Cancel*</div></div>
        <label class="prompt"><svg viewBox="0 0 16 12"><path fill="none" stroke="#7c8086" d="M1 1h10v9H1zM3 4l2 2-2 2M6 8h3"/><path fill="#555" d="M12 4h4l-2 3z"/></svg><input type="text" placeholder="Type a command" aria-label="Command line"></label>
      </div>
    </div>
  </div>
</main>

<footer class="status">
  <div class="layouts">
    <button class="burger" aria-label="Layouts"><svg><use href="#menu"/></svg></button>
    <button class="model"><span>Model</span></button>
    <button>A3</button><i class="slash"></i><button>A2</button><i class="slash"></i>
    <button aria-label="New layout"><svg><use href="#plus"/></svg></button><i class="slash"></i>
  </div>
  <div class="toggles">
    <button class="txt">MODEL</button><button aria-label="Grid"><svg><use href="#grid"/></svg></button><button aria-label="Snap"><svg><use href="#snap"/></svg></button><i class="dd"></i>
    <button aria-label="Ortho"><svg><use href="#ortho"/></svg></button><button class="hot" aria-label="Polar"><svg><use href="#polar"/></svg></button><i class="dd"></i>
    <button aria-label="Isodraft"><svg><use href="#iso"/></svg></button><i class="dd"></i>
    <button class="hot" aria-label="Tracking"><svg><use href="#track"/></svg></button><button class="hot" aria-label="Object snap"><svg><use href="#osnap"/></svg></button><i class="dd"></i>
    <button class="hot" aria-label="Annotation visibility"><svg><use href="#anno2"/></svg></button><button aria-label="Auto scale"><svg><use href="#anno2"/></svg></button><button aria-label="Scale"><svg><use href="#anno"/></svg></button><button class="ratio">1:1</button><i class="dd"></i>
    <button aria-label="Workspace"><svg><use href="#gear"/></svg></button><i class="dd"></i><button aria-label="Monitor"><svg><use href="#plus"/></svg></button>
    <button aria-label="Isolate objects"><svg><use href="#iso2"/></svg></button><button aria-label="License"><svg><use href="#scroll"/></svg></button><button aria-label="Add-ins"><svg><use href="#puzzle"/></svg></button><button aria-label="Performance"><svg><use href="#photo"/></svg></button><button aria-label="Clean screen"><svg><use href="#full"/></svg></button><button aria-label="Customize"><svg><use href="#menu"/></svg></button>
  </div>
</footer>

<div class="player">
  <svg class="cover" viewBox="0 0 46 46">
    <circle cx="23" cy="23" r="23" fill="#111216"/>
    <path d="M5 16A19 19 0 0 1 32 5M12 9l10-6" stroke="#3b3e45" stroke-width="4" fill="none"/>
    <g transform="rotate(-8 23 23)">
      <g fill="none" stroke="#d9ad6e" stroke-width="3" stroke-linejoin="round" stroke-linecap="round"><path d="M9 20q-3 6 1 6 4-1 4-10V9M18 19q-4 5 0 6 4 0 4-6v6M27 24V12q1-4 4-3M25 16h6M35 24V9M31 15h8M12 43V30q5-4 6 1-1 4-5 3M21 29v6q4 2 5-6v7M29 36v-8q4-3 4 7M36 35V22M41 23l-5 6 6 5"/></g>
      <g fill="none" stroke="#c4222e" stroke-width="2" stroke-linejoin="round" stroke-linecap="round"><path d="M9 20q-3 6 1 6 4-1 4-10V9M18 19q-4 5 0 6 4 0 4-6v6M27 24V12q1-4 4-3M25 16h6M35 24V9M31 15h8M12 43V30q5-4 6 1-1 4-5 3M21 29v6q4 2 5-6v7M29 36v-8q4-3 4 7M36 35V22M41 23l-5 6 6 5"/></g>
    </g>
    <circle cx="23" cy="23" r="4" fill="#e5202b"/>
  </svg>
  <div class="trackinfo"><strong>Around the World</strong><span>Daft Punk</span></div>
  <div class="times"><span>05:12</span><i></i><span>07:09</span></div>
  <progress value="114" max="162" aria-label="Playback"></progress>
</div>

<div class="chat">
  <p><svg><use href="#twitch"/></svg><b>Fabrusk</b> : Em uma empresa de segurança do trabalho na vdd</p>
  <p><svg><use href="#twitch"/></svg><b>Fabrusk</b> : É um trabalho chatinho, entrar em contato com cliente, fazer orçamento essas coisas</p>
  <p><svg><use href="#twitch"/></svg><b>Fabrusk</b> : É isso querida, to indo dormir, se cuida</p>
  <p><svg><use href="#twitch"/></svg><b>Fabrusk</b> : vou aparecer mais por aqui</p>
  <p class="fading"><svg><use href="#twitch"/></svg><b>Fabrusk</b> : boa noite</p>
</div>

<div class="goal">
  <div class="link">livepix.gg/itsmariá</div>
  <div class="meter">Mês da strumer
    <svg viewBox="0 0 12 12"><path fill="#f3c05a" d="M1 6h10v5H1z"/><path fill="#e08a4b" d="M1 8h10v1H1zM0 11h12v1H0z"/><path fill="#fff2d0" d="M1 5h10v2H1z"/><path stroke="#e5a13b" d="M3 2v3M6 1v4M9 2v3"/></svg>
    (R$ 6,00/R$ 400,00)</div>
  <div class="ends">Termina em 26 dias</div>
</div>
</body>
</html>
```
FILE: styles.css
```css
* { box-sizing: border-box; }
body {
  margin: 0;
  min-height: 100vh;
  display: flex;
  flex-direction: column;
  position: relative;
  overflow: hidden;
  background: #222933;
  color: #e4e6ea;
  font: 8px/10px Lato, "Open Sans", sans-serif;
}
.defs { position: absolute; width: 0; height: 0; }
button, input, select {
  font: inherit;
  color: inherit;
  background: none;
  border: 0;
  padding: 0;
  margin: 0;
}
button { display: flex; align-items: center; white-space: nowrap; }
select { appearance: none; }
svg { display: block; flex: none; width: 12px; height: 12px; overflow: visible; }

/* small drop-down arrow */
.dd {
  flex: none;
  width: 0;
  height: 0;
  border: 2px solid transparent;
  border-top: 3px solid #d3d6db;
  border-bottom: 0;
}
.dd.dim { border-top-color: #6d7480; }
.dd.end { margin-left: auto; }
.dd.side { border: 3px solid transparent; border-left: 3px solid #fff; border-right: 0; }
.dd.bar { border-width: 4px 3px 0; box-shadow: 0 -6px 0 -5px #d3d6db; }

/* title bar */
.titlebar {
  display: grid;
  grid-template-columns: 413px 1fr 445px;
  align-items: center;
  height: 20px;
}
.quick, .account { display: flex; align-items: center; }
.quick { padding-left: 10px; gap: 4px; }
.quick svg { width: 12px; height: 12px; }
.logo {
  justify-content: center;
  width: 15px;
  height: 15px;
  background: #d4164b;
  border-left: 2px solid #8c1238;
  color: #fff;
  font-size: 10px;
  font-weight: 900;
}
.quick .logo + .dd { margin: 0 3px 0 0; }
.quick .redo { margin-left: -1px; color: #5b6470; }
.quick .dim { margin-right: -1px; }
.share { gap: 3px; color: #8fd0f2; }
.apptitle { white-space: nowrap; }
.account { padding-left: 3px; gap: 4px; }
.account svg { width: 11px; height: 11px; }
.account .side { margin-right: -3px; }
.search {
  width: 120px;
  height: 14px;
  padding: 0 2px;
  background: #3b4453;
  font-style: italic;
}
.search::placeholder { color: #b4b9c2; opacity: 1; }
.who { gap: 4px; }
.who + .dd { margin: 0 4px 0 -3px; }
.rule { width: 1px; height: 12px; background: #464e5c; }
.winbtns { display: flex; gap: 23px; margin-left: auto; padding-right: 11px; }
.winbtns svg, .vpbtns svg { width: 8px; height: 8px; }

/* ribbon tabs */
.menutabs { display: flex; height: 16px; padding: 2px 0 0 3px; }
.menutabs button { padding: 0 6px 0 7px; color: #b4b9c2; }
.menutabs .on { background: #3b4252; color: #fff; }
.menutabs .ribtoggle { gap: 4px; padding-left: 14px; }
.pill { width: 10px; height: 6px; border: 2px solid #fff; background: #222933; border-radius: 1px; }

/* ribbon */
.ribbon { display: flex; height: 69px; background: #3b4252; }
.panel {
  display: flex;
  flex-direction: column;
  flex: none;
  border-right: 1px solid #2b313d;
}
.body { display: grid; height: 55px; padding-top: 3px; }
.cap { display: flex; align-items: center; justify-content: center; gap: 5px; height: 14px; }
.col { display: grid; grid-template-rows: repeat(3, 17px); }
.col button { gap: 3px; }
.big { flex-direction: column; height: 51px; text-align: center; }
.big > svg, .bigA { width: 24px; height: 24px; margin: 1px 0 2px; }
.bigA { font: 26px/24px "Open Sans", sans-serif; color: #fff; }
.big .dd { margin-top: 3px; }
.lit { background: #3c566b; outline: 1px solid #5f93b4; outline-offset: -1px; }
.combo { display: flex; align-items: center; height: 14px; background: #474f60; }
.combo select { flex: 1; min-width: 0; }
.swatch { flex: none; width: 11px; height: 11px; background: #fff; }
.stroke { flex: none; width: 42px; height: 1px; background: #d6d9dd; }
.launch { font-size: 7px; color: #aeb4bd; }

.draw { width: 152px; }
.draw .body { grid-template-columns: 26px 32px 34px 28px 1fr; padding-left: 2px; }
.draw .col { padding-left: 2px; }
.draw .col button { gap: 4px; }
.modify { width: 166px; }
.modify .body { grid-template-columns: 48px 46px 42px 1fr; padding-left: 3px; column-gap: 1px; }
.modify .col:last-child { padding-left: 6px; }
.annot { width: 127px; }
.annot .body { grid-template-columns: 32px 38px 46px; column-gap: 2px; }
.layer { width: 182px; }
.layer .body { grid-template-columns: 41px 135px; column-gap: 2px; }
.layer .combo { gap: 2px; padding-left: 1px; align-self: center; }
.layer .combo svg { width: 11px; height: 11px; }
.layer .combo select { padding-left: 2px; }
.row { display: flex; align-items: center; gap: 4px; }
.block { width: 159px; }
.block .body { grid-template-columns: 30px 46px 4px 74px; column-gap: 1px; }
.more { align-self: end; height: 30px; }
.props { width: 178px; }
.props .body { grid-template-columns: 44px 1fr; column-gap: 0; }
.props .cap { position: relative; padding-right: 18px; }
.props .launch { position: absolute; right: 2px; }
.prow { display: grid; grid-template-columns: 11px 1fr; align-items: center; column-gap: 3px; padding-right: 2px; }
.prow svg { width: 11px; }
.prow .combo { padding: 0 2px 0 3px; gap: 2px; }
.groups { width: 45px; }
.groups .body, .utils .body, .clipb .body { grid-template-columns: 1fr auto; }
.groups .col { padding-right: 1px; }
.groups .col button { padding: 0 1px; }
.utils { width: 66px; }
.utils .col { padding-right: 4px; }
.clipb { width: 60px; }
.clipb .col { padding-right: 3px; }
.utils .big > svg { width: 20px; }
.view { flex: 1; border-right-color: #3b4252; }
.view .body { grid-template-columns: 44px; }
.view .cap { justify-content: flex-start; padding-left: 4px; }

/* drawing tabs */
.filetabs { display: flex; align-items: stretch; height: 22px; border-bottom: 2px solid #3b4252; }
.filetabs button { justify-content: center; }
.burger { width: 31px; justify-content: center; }
.slash { flex: none; align-self: center; width: 1px; height: 12px; background: #505866; transform: skewX(-20deg); }
.start { width: 30px; }
.filetabs .current {
  width: 57px;
  gap: 6px;
  margin-left: 3px;
  background: #3b4252;
  color: #fff;
  font-weight: 700;
  transform: skewX(-20deg);
}
.current span, .model span { transform: skewX(20deg); }
.current .x { font-weight: 400; color: #b4b9c2; }
.other { width: 72px; }
.other + .slash { margin-left: 6px; }
.filetabs .add { width: 27px; }
.add svg { width: 9px; height: 9px; }

/* drawing area */
.work { display: flex; flex: 1; min-height: 0; }
.palette {
  display: flex;
  justify-content: center;
  align-items: center;
  flex: none;
  width: 16px;
  background: #3b4252;
  border-right: 2px solid #2c323e;
}
.palette span { writing-mode: vertical-rl; transform: rotate(180deg); }
.stage { display: flex; flex-direction: column; flex: 1; min-width: 0; }
.canvas { position: relative; flex: 1; min-height: 0; overflow: hidden; }
.drawing { position: absolute; inset: 0; width: 100%; height: 100%; }
.cadtext { fill: #72777f; font: 200 20px "DejaVu Sans Light", "DejaVu Sans", sans-serif; }
.vplabel { position: absolute; left: 3px; top: 5px; }
.viewtools {
  position: absolute;
  top: 6px;
  right: 7px;
  display: flex;
  flex-direction: column;
  align-items: flex-end;
}
.vpbtns { display: flex; gap: 6px; }
.cube {
  position: relative;
  display: grid;
  grid-template: 20px 58px 20px / 20px 56px 20px;
  place-items: center;
  margin: 10px 1px 0 0;
  font: 700 13px/14px "Liberation Sans", sans-serif;
  color: #b9bdc2;
}
.cube::before {
  content: "";
  position: absolute;
  inset: 7px 8px;
  border: 7px solid #424851;
  border-radius: 50%;
}
.cube b { position: relative; }
.cube b:first-child, .cube b:last-child { grid-column: 2; }
.cube b:nth-child(2) { grid-column: 1; }
.cube button {
  position: relative;
  justify-content: center;
  width: 34px;
  height: 36px;
  background: #b4b9c2;
  border: 6px solid #c3c6c9;
  color: #3c434e;
  font: 700 8px/10px Lato, sans-serif;
}
.wcs {
  width: 32px;
  height: 12px;
  margin: 12px 33px 0 0;
  padding-left: 2px;
  border: 1px solid #b4b8be;
  border-radius: 4px;
  background: #8f949d;
  color: #d0d3d7;
}

/* command line */
.command {
  display: flex;
  height: 38px;
  padding-top: 3px;
  border-top: 2px solid #41464f;
  border-bottom: 2px solid #323a47;
}
.grip { display: flex; flex-direction: column; align-items: center; justify-content: space-between; width: 17px; }
.grip i { width: 11px; height: 4px; background: #6d737d; }
.cmdbox { flex: 1; min-width: 0; margin-right: 1px; background: #fff; font: 9px/10px "Liberation Mono", monospace; }
.history {
  display: flex;
  flex-direction: column;
  justify-content: flex-end;
  height: 18px;
  padding-left: 2px;
  overflow: hidden;
  background: #c8c8c8;
  border-bottom: 1px solid #8e8e8e;
  color: #333;
}
.prompt { display: flex; align-items: center; gap: 4px; height: 13px; padding-left: 3px; }
.prompt svg { width: 16px; height: 10px; }
.prompt input { flex: 1; color: #333; font-style: italic; }
.prompt input::placeholder { color: #777; opacity: 1; }

/* status bar */
.status { display: flex; justify-content: space-between; height: 22px; border-top: 1px solid #3a424f; }
.layouts { display: flex; align-items: center; gap: 8px; }
.layouts .burger { margin-right: -8px; }
.layouts .model {
  justify-content: center;
  align-self: stretch;
  width: 39px;
  background: #3b4252;
  color: #fff;
  font-weight: 700;
  transform: skewX(-20deg);
}
.layouts svg { width: 10px; height: 10px; }
.toggles {
  display: grid;
  grid-template-columns: 33px 17px 16px 12px 17px 14px 12px 15px 12px 16px 16px 13px 16px 16px 16px 14px 11px 16px 11px 17px 17px 17px 17px 20px 18px 15px;
  align-items: center;
  justify-items: center;
  padding-right: 3px;
  background: #2d3440;
}
.toggles svg { width: 11px; height: 11px; }
.toggles .dd { border-width: 4px 3px 0; }
.hot { justify-content: center; width: 15px; height: 16px; background: #5d93c4; }

/* music player overlay */
.player {
  position: absolute;
  left: 558px;
  top: 11px;
  width: 168px;
  display: grid;
  grid-template: 26px 15px 5px / 46px 118px;
  gap: 4px;
  color: #f7dcae;
}
.cover { grid-row: 1 / 3; width: 46px; height: 46px; }
.trackinfo, .times { background: #5c372f; border-radius: 3px; padding: 0 4px; }
.trackinfo { display: flex; flex-direction: column; padding-top: 4px; font: 6px/10px "Open Sans", sans-serif; }
.trackinfo strong { font: 700 8px/10px "Open Sans", sans-serif; }
.times { display: flex; align-items: center; justify-content: space-between; font: 700 6px/8px "Open Sans", sans-serif; }
.times i { width: 64px; height: 5px; background: #8b2029; border-radius: 3px; }
.player progress {
  grid-column: 1 / 3;
  appearance: none;
  width: 162px;
  height: 4px;
  border: 0;
}
.player progress::-webkit-progress-bar { background: #5c372f; }
.player progress::-webkit-progress-value { background: #c00f2f; }

/* chat overlay */
.chat {
  position: absolute;
  left: 4px;
  bottom: 31px;
  width: 464px;
  color: #fff;
  font: 500 14px/21px Roboto, sans-serif;
  text-shadow: 0 0 2px #000, 1px 1px 1px #000;
}
.chat p { margin: 4px 0 0; }
.chat svg { display: inline-block; width: 11px; height: 11px; margin-right: 7px; }
.chat b { color: #5a1bb0; }
.fading { opacity: 0.8; }

/* donation goal overlay */
.goal {
  position: absolute;
  left: 545px;
  bottom: 1px;
  width: 240px;
  text-align: center;
  font: 700 11px/14px Lato, sans-serif;
}
.link { color: #bdaec9; line-height: 18px; text-shadow: 0 0 1px #9c86b3; }
.meter {
  display: flex;
  align-items: center;
  justify-content: center;
  gap: 3px;
  height: 24px;
  border: 1px solid #b79bd2;
  border-left-width: 3px;
  outline: 1px solid rgba(183, 155, 210, 0.4);
  color: #75529a;
}
.meter svg { width: 11px; height: 11px; }
.ends { color: #ddd3e8; line-height: 18px; }
```
